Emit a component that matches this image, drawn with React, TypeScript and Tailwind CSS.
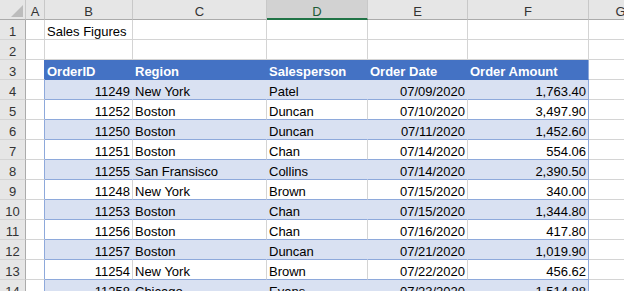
import React from "react";

type Row = [string, string, string, string, string];

const DATA: Row[] = [
  ["11249", "New York", "Patel", "07/09/2020", "1,763.40"],
  ["11252", "Boston", "Duncan", "07/10/2020", "3,497.90"],
  ["11250", "Boston", "Duncan", "07/11/2020", "1,452.60"],
  ["11251", "Boston", "Chan", "07/14/2020", "554.06"],
  ["11255", "San Fransisco", "Collins", "07/14/2020", "2,390.50"],
  ["11248", "New York", "Brown", "07/15/2020", "340.00"],
  ["11253", "Boston", "Chan", "07/15/2020", "1,344.80"],
  ["11256", "Boston", "Chan", "07/16/2020", "417.80"],
  ["11257", "Boston", "Duncan", "07/21/2020", "1,019.90"],
  ["11254", "New York", "Brown", "07/22/2020", "456.62"],
  ["11258", "Chicago", "Evans", "07/23/2020", "1,514.88"],
];

const HEADERS = ["OrderID", "Region", "Salesperson", "Order Date", "Order Amount"];

// widths of B..F (border included), right-aligned flags
const COLS = [
  { w: "w-[88px]", right: true },
  { w: "w-[134px]", right: false },
  { w: "w-[101px]", right: false },
  { w: "w-[100px]", right: true },
  { w: "w-[121px]", right: true },
];

const cellText = "h-5 shrink-0 overflow-hidden whitespace-nowrap px-[2px] pt-[4px] leading-[15px]";

function RowHead({ n }: { n: number }) {
  return (
    <div className="h-5 w-[26px] shrink-0 border-r border-b border-r-[#ababab] border-b-[#d4d4d4] bg-[#e6e6e6] pt-[4px] text-center leading-[15px] text-[#333]">
      {n}
    </div>
  );
}

function ColHeader() {
  const letters = [
    { l: "B", w: "w-[88px]" },
    { l: "C", w: "w-[134px]" },
    { l: "D", w: "w-[101px]" },
    { l: "E", w: "w-[100px]" },
    { l: "F", w: "w-[121px]" },
    { l: "G", w: "w-[64px]" },
  ];
  return (
    <div className="flex">
      <div className="relative h-5 w-[26px] shrink-0 border-r border-b border-r-[#c8c8c8] border-b-[#ababab] bg-[#e6e6e6]">
        <svg className="absolute left-0 top-0" width="26" height="20">
          <polygon points="23,5 23,17 11,17" fill="#bcbcbc" />
        </svg>
      </div>
      <div className="h-5 w-[19px] shrink-0 border-r border-b border-r-[#c8c8c8] border-b-[#ababab] bg-[#e6e6e6] pt-[4px] text-center leading-[15px] text-[#333]">
        A
      </div>
      {letters.map(({ l, w }) =>
        l === "D" ? (
          <div
            key={l}
            className={`${w} h-5 shrink-0 border-r border-b-2 border-r-[#c8c8c8] border-b-[#217346] bg-[#d2d2d2] pt-[4px] text-center leading-[15px] text-[#1d5c38]`}
          >
            {l}
          </div>
        ) : (
          <div
            key={l}
            className={`${w} h-5 shrink-0 border-r border-b border-r-[#c8c8c8] border-b-[#ababab] bg-[#e6e6e6] pt-[4px] text-center leading-[15px] text-[#333]`}
          >
            {l}
          </div>
        ),
      )}
    </div>
  );
}

function PlainRow({ n, first }: { n: number; first?: string }) {
  return (
    <div className="flex">
      <RowHead n={n} />
      <div className="h-5 w-[19px] shrink-0 border-r border-b border-[#d4d4d4]" />
      {COLS.map((c, i) => (
        <div key={i} className={`${cellText} ${c.w} border-r border-b border-[#d4d4d4] text-black`}>
          {i === 0 ? first : null}
        </div>
      ))}
      <div className="h-5 w-[64px] shrink-0 border-r border-b border-[#d4d4d4]" />
    </div>
  );
}

function HeaderRow() {
  return (
    <div className="flex">
      <RowHead n={3} />
      <div className="h-5 w-[19px] shrink-0 border-r border-b border-r-[#4472c4] border-b-[#d4d4d4]" />
      {COLS.map((c, i) => (
        <div
          key={i}
          className={`${cellText} ${c.w} border-r border-b bg-[#4472c4] font-bold text-white ${
            i === 4 ? "border-r-[#8ea9db]" : "border-r-[#4472c4]"
          } border-b-[#4472c4]`}
        >
          {HEADERS[i]}
        </div>
      ))}
      <div className="h-5 w-[64px] shrink-0 border-r border-b border-[#d4d4d4]" />
    </div>
  );
}

function DataRow({ n, row, banded }: { n: number; row: Row; banded: boolean }) {
  return (
    <div className="flex">
      <RowHead n={n} />
      <div className="h-5 w-[19px] shrink-0 border-r border-b border-r-[#8ea9db] border-b-[#d4d4d4]" />
      {COLS.map((c, i) => {
        const right =
          i === 4
            ? "border-r-[#8ea9db]"
            : banded
              ? "border-r-[#d9e1f2]"
              : "border-r-[#d4d4d4]";
        return (
          <div
            key={i}
            className={`${cellText} ${c.w} border-r border-b border-b-[#8ea9db] ${right} ${
              banded ? "bg-[#d9e1f2]" : "bg-white"
            } ${c.right ? "text-right" : "text-left"} text-black`}
          >
            {row[i]}
          </div>
        );
      })}
      <div className="h-5 w-[64px] shrink-0 border-r border-b border-[#d4d4d4]" />
    </div>
  );
}

export default function App() {
  return (
    <div
      className="h-[291px] w-[624px] overflow-hidden bg-white text-[13px]"
      style={{ fontFamily: '"Liberation Sans", Arial, sans-serif' }}
    >
      <div className="w-[700px]">
        <ColHeader />
        <PlainRow n={1} first="Sales Figures" />
        <PlainRow n={2} />
        <HeaderRow />
        {DATA.map((r, i) => (
          <DataRow key={i} n={i + 4} row={r} banded={i % 2 === 0} />
        ))}
      </div>
    </div>
  );
}
